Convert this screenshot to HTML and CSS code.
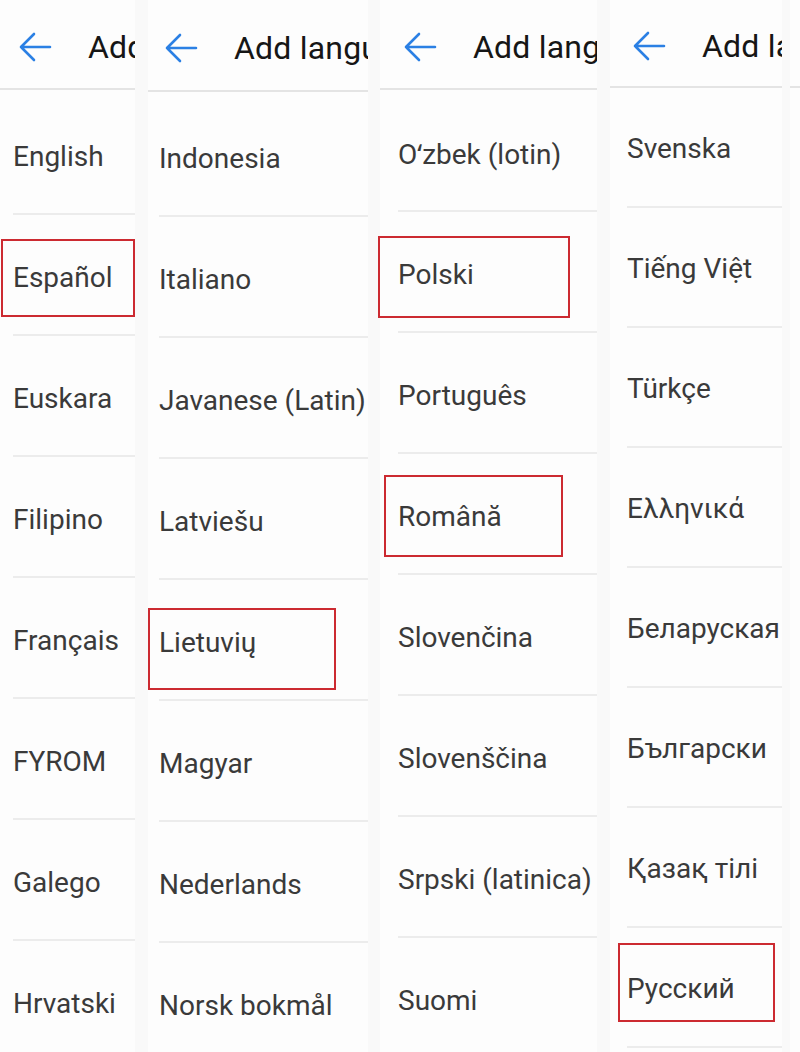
FILE: index.html
```html
<!DOCTYPE html>
<html lang="en">
<head>
<meta charset="utf-8">
<title>Add language</title>
<link rel="stylesheet" href="styles.css">
</head>
<body>
<main class="strip">

  <section class="screen screen-a">
    <header class="bar">
      <svg class="back" viewBox="0 0 34 32" aria-hidden="true"><path d="M32 16H3M16 3L3 16l13 13"/></svg>
      <h1 class="title">Add language</h1>
    </header>
    <ul class="langs">
      <li class="lang">English</li>
      <li class="lang">Español<span class="mark mark-es"></span></li>
      <li class="lang">Euskara</li>
      <li class="lang">Filipino</li>
      <li class="lang">Français</li>
      <li class="lang">FYROM</li>
      <li class="lang">Galego</li>
      <li class="lang">Hrvatski</li>
    </ul>
  </section>

  <section class="screen screen-b">
    <header class="bar">
      <svg class="back" viewBox="0 0 34 32" aria-hidden="true"><path d="M32 16H3M16 3L3 16l13 13"/></svg>
      <h1 class="title">Add language</h1>
    </header>
    <ul class="langs">
      <li class="lang">Indonesia</li>
      <li class="lang">Italiano</li>
      <li class="lang">Javanese (Latin)</li>
      <li class="lang">Latviešu</li>
      <li class="lang">Lietuvių<span class="mark mark-lt"></span></li>
      <li class="lang">Magyar</li>
      <li class="lang">Nederlands</li>
      <li class="lang">Norsk bokmål</li>
    </ul>
  </section>

  <section class="screen screen-c">
    <header class="bar">
      <svg class="back" viewBox="0 0 34 32" aria-hidden="true"><path d="M32 16H3M16 3L3 16l13 13"/></svg>
      <h1 class="title">Add language</h1>
    </header>
    <ul class="langs">
      <li class="lang">Oʻzbek (lotin)</li>
      <li class="lang">Polski<span class="mark mark-pl"></span></li>
      <li class="lang">Português</li>
      <li class="lang">Română<span class="mark mark-ro"></span></li>
      <li class="lang">Slovenčina</li>
      <li class="lang">Slovenščina</li>
      <li class="lang">Srpski (latinica)</li>
      <li class="lang">Suomi</li>
    </ul>
  </section>

  <section class="screen screen-d">
    <header class="bar">
      <svg class="back" viewBox="0 0 34 32" aria-hidden="true"><path d="M32 16H3M16 3L3 16l13 13"/></svg>
      <h1 class="title">Add language</h1>
    </header>
    <ul class="langs">
      <li class="lang">Svenska</li>
      <li class="lang">Tiếng Việt</li>
      <li class="lang">Türkçe</li>
      <li class="lang">Ελληνικά</li>
      <li class="lang">Беларуская</li>
      <li class="lang">Български</li>
      <li class="lang">Қазақ тілі</li>
      <li class="lang">Русский<span class="mark mark-ru"></span></li>
    </ul>
  </section>

  <section class="screen screen-e">
    <header class="bar"></header>
  </section>

</main>
</body>
</html>
```

FILE: styles.css
```css
* {
  box-sizing: border-box;
}

html,
body {
  margin: 0;
  padding: 0;
  background: #f9f9f9;
}

body {
  font-family: Roboto, "Noto Sans", "Liberation Sans", sans-serif;
  -webkit-font-smoothing: antialiased;
}

.strip {
  display: flex;
  align-items: stretch;
  height: 1052px;
  overflow: hidden;
}

/* one phone screen, cropped to a narrow column */
.screen {
  --inset: 13px;
  --bar: 90px;
  --lead: 4px;
  --row: 121px;
  position: relative;
  flex: none;
  background: #fdfdfd;
  height: 100%;
}

.screen-a { width: 135px; --inset: 13px; --bar: 90px; --lead: 4px; }
.screen-b { width: 220px; margin-left: 13px; --inset: 11px; --bar: 92px; --lead: 4px; }
.screen-c { width: 217px; margin-left: 12px; --inset: 18px; --bar: 90px; --lead: 1px; }
.screen-d { width: 172px; margin-left: 13px; --inset: 17px; --bar: 88px; --lead: 0px; --row: 120px; }
.screen-e { width: 10px; margin-left: 8px; --bar: 88px; }

.bar {
  display: flex;
  align-items: center;
  height: var(--bar);
  padding: 6px 0 0 calc(var(--inset) + 5px);
  border-bottom: 2px solid #e4e4e4;
  overflow: hidden;
  white-space: nowrap;
}

.back {
  flex: none;
  width: 34px;
  height: 32px;
  fill: none;
  stroke: #2b80e4;
  stroke-width: 2.6;
  stroke-linecap: round;
  stroke-linejoin: round;
}

.title {
  margin: 0 0 0 36px;
  font-size: 32px;
  font-weight: 400;
  color: #161616;
  letter-spacing: 0.2px;
}

.langs {
  list-style: none;
  margin: 0;
  padding: var(--lead) 0 0 var(--inset);
}

.screen-d .lang {
  padding-top: 2px;
}

.lang {
  position: relative;
  display: flex;
  align-items: center;
  height: var(--row);
  padding-top: 5px;
  border-bottom: 2px solid #ececec;
  font-size: 28px;
  color: #3a3a3a;
  white-space: nowrap;
}

/* red highlight frames drawn over selected rows */
.mark {
  position: absolute;
  border: 2px solid #cc2a31;
  pointer-events: none;
}

.mark-es { left: -12px; top: 24px; width: 134px; height: 78px; }
.mark-lt { left: -11px; top: 28px; width: 188px; height: 82px; }
.mark-pl { left: -20px; top: 24px; width: 192px; height: 82px; }
.mark-ro { left: -14px; top: 21px; width: 179px; height: 82px; }
.mark-ru { left: -9px; top: 15px; width: 157px; height: 79px; }
```
